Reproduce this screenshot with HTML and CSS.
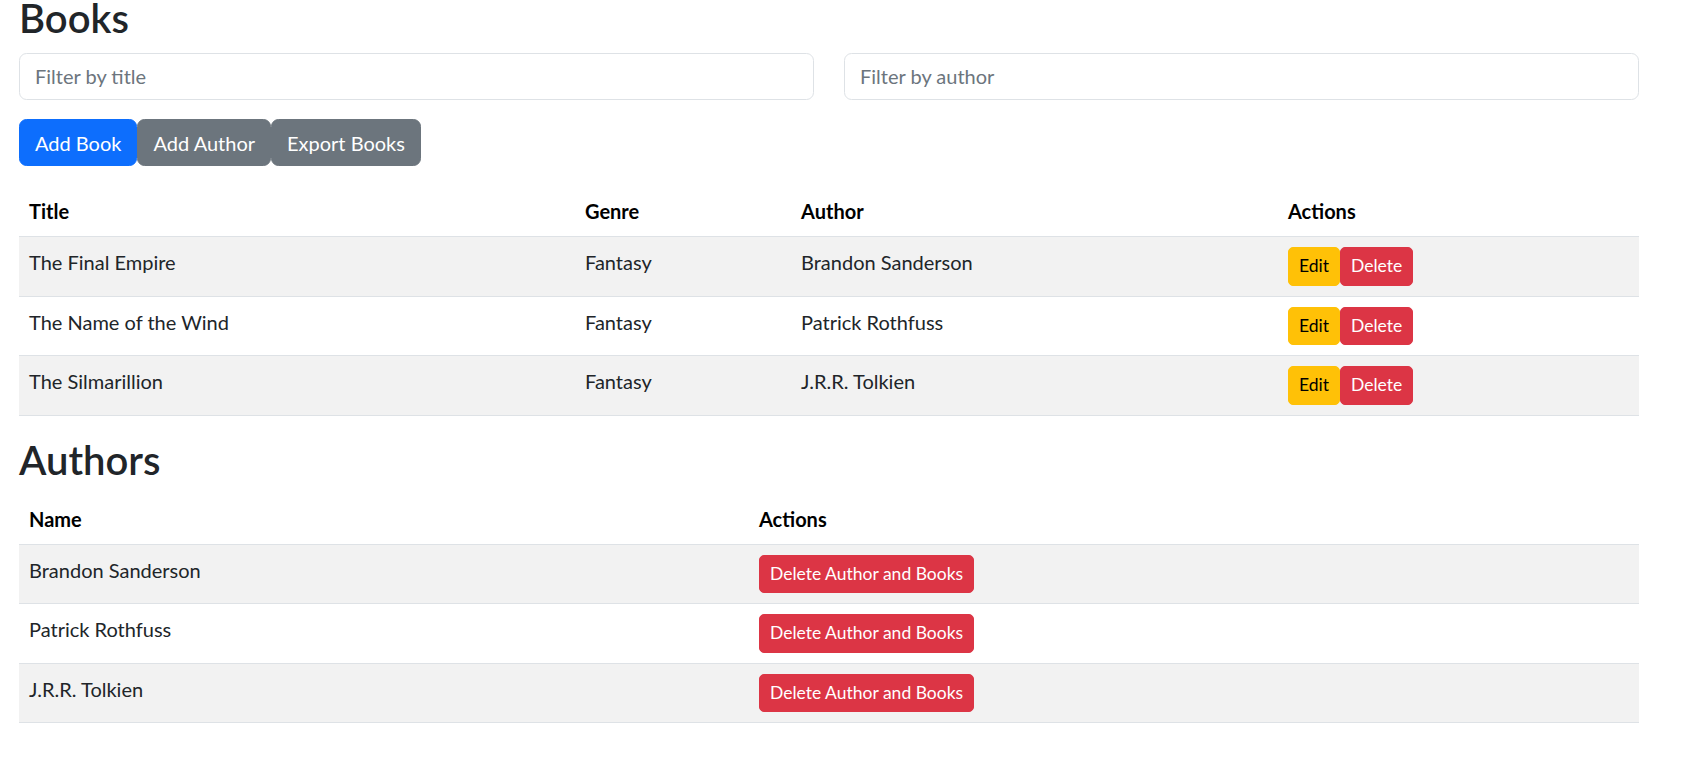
FILE: index.html
```html
<!DOCTYPE html>
<html lang="en">
<head>
<meta charset="utf-8">
<title>Books</title>
<link rel="stylesheet" href="styles.css">
</head>
<body>
<main class="page">
  <h2 class="section-title first">Books</h2>
  <div class="filters">
    <input class="form-control" type="text" placeholder="Filter by title">
    <input class="form-control" type="text" placeholder="Filter by author">
  </div>
  <div class="toolbar">
    <button class="btn btn-primary">Add Book</button><button class="btn btn-secondary">Add Author</button><button class="btn btn-secondary">Export Books</button>
  </div>
  <table class="table">
    <thead>
      <tr>
        <th class="col-title">Title</th>
        <th class="col-genre">Genre</th>
        <th class="col-author">Author</th>
        <th class="col-actions">Actions</th>
      </tr>
    </thead>
    <tbody>
      <tr>
        <td>The Final Empire</td>
        <td>Fantasy</td>
        <td>Brandon Sanderson</td>
        <td><div class="actions"><button class="btn-sm btn-warning">Edit</button><button class="btn-sm btn-danger">Delete</button></div></td>
      </tr>
      <tr>
        <td>The Name of the Wind</td>
        <td>Fantasy</td>
        <td>Patrick Rothfuss</td>
        <td><div class="actions"><button class="btn-sm btn-warning">Edit</button><button class="btn-sm btn-danger">Delete</button></div></td>
      </tr>
      <tr>
        <td>The Silmarillion</td>
        <td>Fantasy</td>
        <td>J.R.R. Tolkien</td>
        <td><div class="actions"><button class="btn-sm btn-warning">Edit</button><button class="btn-sm btn-danger">Delete</button></div></td>
      </tr>
    </tbody>
  </table>

  <h2 class="section-title">Authors</h2>
  <table class="table">
    <thead>
      <tr>
        <th class="col-name">Name</th>
        <th>Actions</th>
      </tr>
    </thead>
    <tbody>
      <tr>
        <td>Brandon Sanderson</td>
        <td><button class="btn-sm btn-danger">Delete Author and Books</button></td>
      </tr>
      <tr>
        <td>Patrick Rothfuss</td>
        <td><button class="btn-sm btn-danger">Delete Author and Books</button></td>
      </tr>
      <tr>
        <td>J.R.R. Tolkien</td>
        <td><button class="btn-sm btn-danger">Delete Author and Books</button></td>
      </tr>
    </tbody>
  </table>
</main>
</body>
</html>
```
FILE: styles.css
```css
* { box-sizing: border-box; }

html, body {
  margin: 0;
  background: #fff;
}

body {
  font-family: "Lato", "Liberation Sans", sans-serif;
  font-size: 20px;
  line-height: 30px;
  color: #212529;
}

.page {
  width: 1639px;
  padding-left: 19px;
}

.section-title {
  font-size: 40px;
  line-height: 48px;
  font-weight: 600;
  margin: 0 0 10px;
  color: #212529;
}

.section-title.first {
  line-height: 37px;
  margin: 0 0 15.5px;
}

.filters {
  display: grid;
  grid-template-columns: 795px 795px;
  column-gap: 30px;
  margin-bottom: 19.5px;
}

.form-control {
  display: block;
  width: 100%;
  height: 47px;
  padding: 7.5px 15px;
  font: inherit;
  font-size: 20px;
  line-height: 30px;
  color: #212529;
  background: #fff;
  border: 1px solid #dee2e6;
  border-radius: 7.5px;
  outline: none;
}

.form-control::placeholder {
  color: #6c757d;
  opacity: 1;
}

.toolbar {
  display: flex;
  margin-bottom: 20px;
}

.btn {
  height: 47px;
  padding: 7.5px 15px;
  font: inherit;
  font-size: 20px;
  line-height: 30px;
  color: #fff;
  border: 1px solid transparent;
  border-radius: 7.5px;
  cursor: pointer;
}

.btn-sm {
  height: 38.5px;
  padding: 5px 10px;
  font-family: inherit;
  font-size: 17.5px;
  line-height: 26.5px;
  color: #fff;
  border: 1px solid transparent;
  border-radius: 5px;
  cursor: pointer;
}

.btn-primary { background: #0d6efd; border-color: #0d6efd; }
.btn-secondary { background: #6c757d; border-color: #6c757d; }
.btn-warning { background: #ffc107; border-color: #ffc107; color: #000; }
.btn-danger { background: #dc3545; border-color: #dc3545; color: #fff; }

.actions {
  display: flex;
}

.table {
  width: 1620px;
  border-collapse: collapse;
  table-layout: fixed;
  margin-bottom: 20px;
  color: #212529;
}

.table th,
.table td {
  padding: 10px;
  text-align: left;
  vertical-align: top;
  border-bottom: 1px solid #dee2e6;
}

.table th {
  font-weight: 700;
  color: #000;
}

.table tbody tr:nth-child(odd) td {
  background: #f2f2f2;
}

.col-title { width: 556px; }
.col-genre { width: 216px; }
.col-author { width: 487px; }
.col-actions { width: 361px; }
.col-name { width: 730px; }
```
